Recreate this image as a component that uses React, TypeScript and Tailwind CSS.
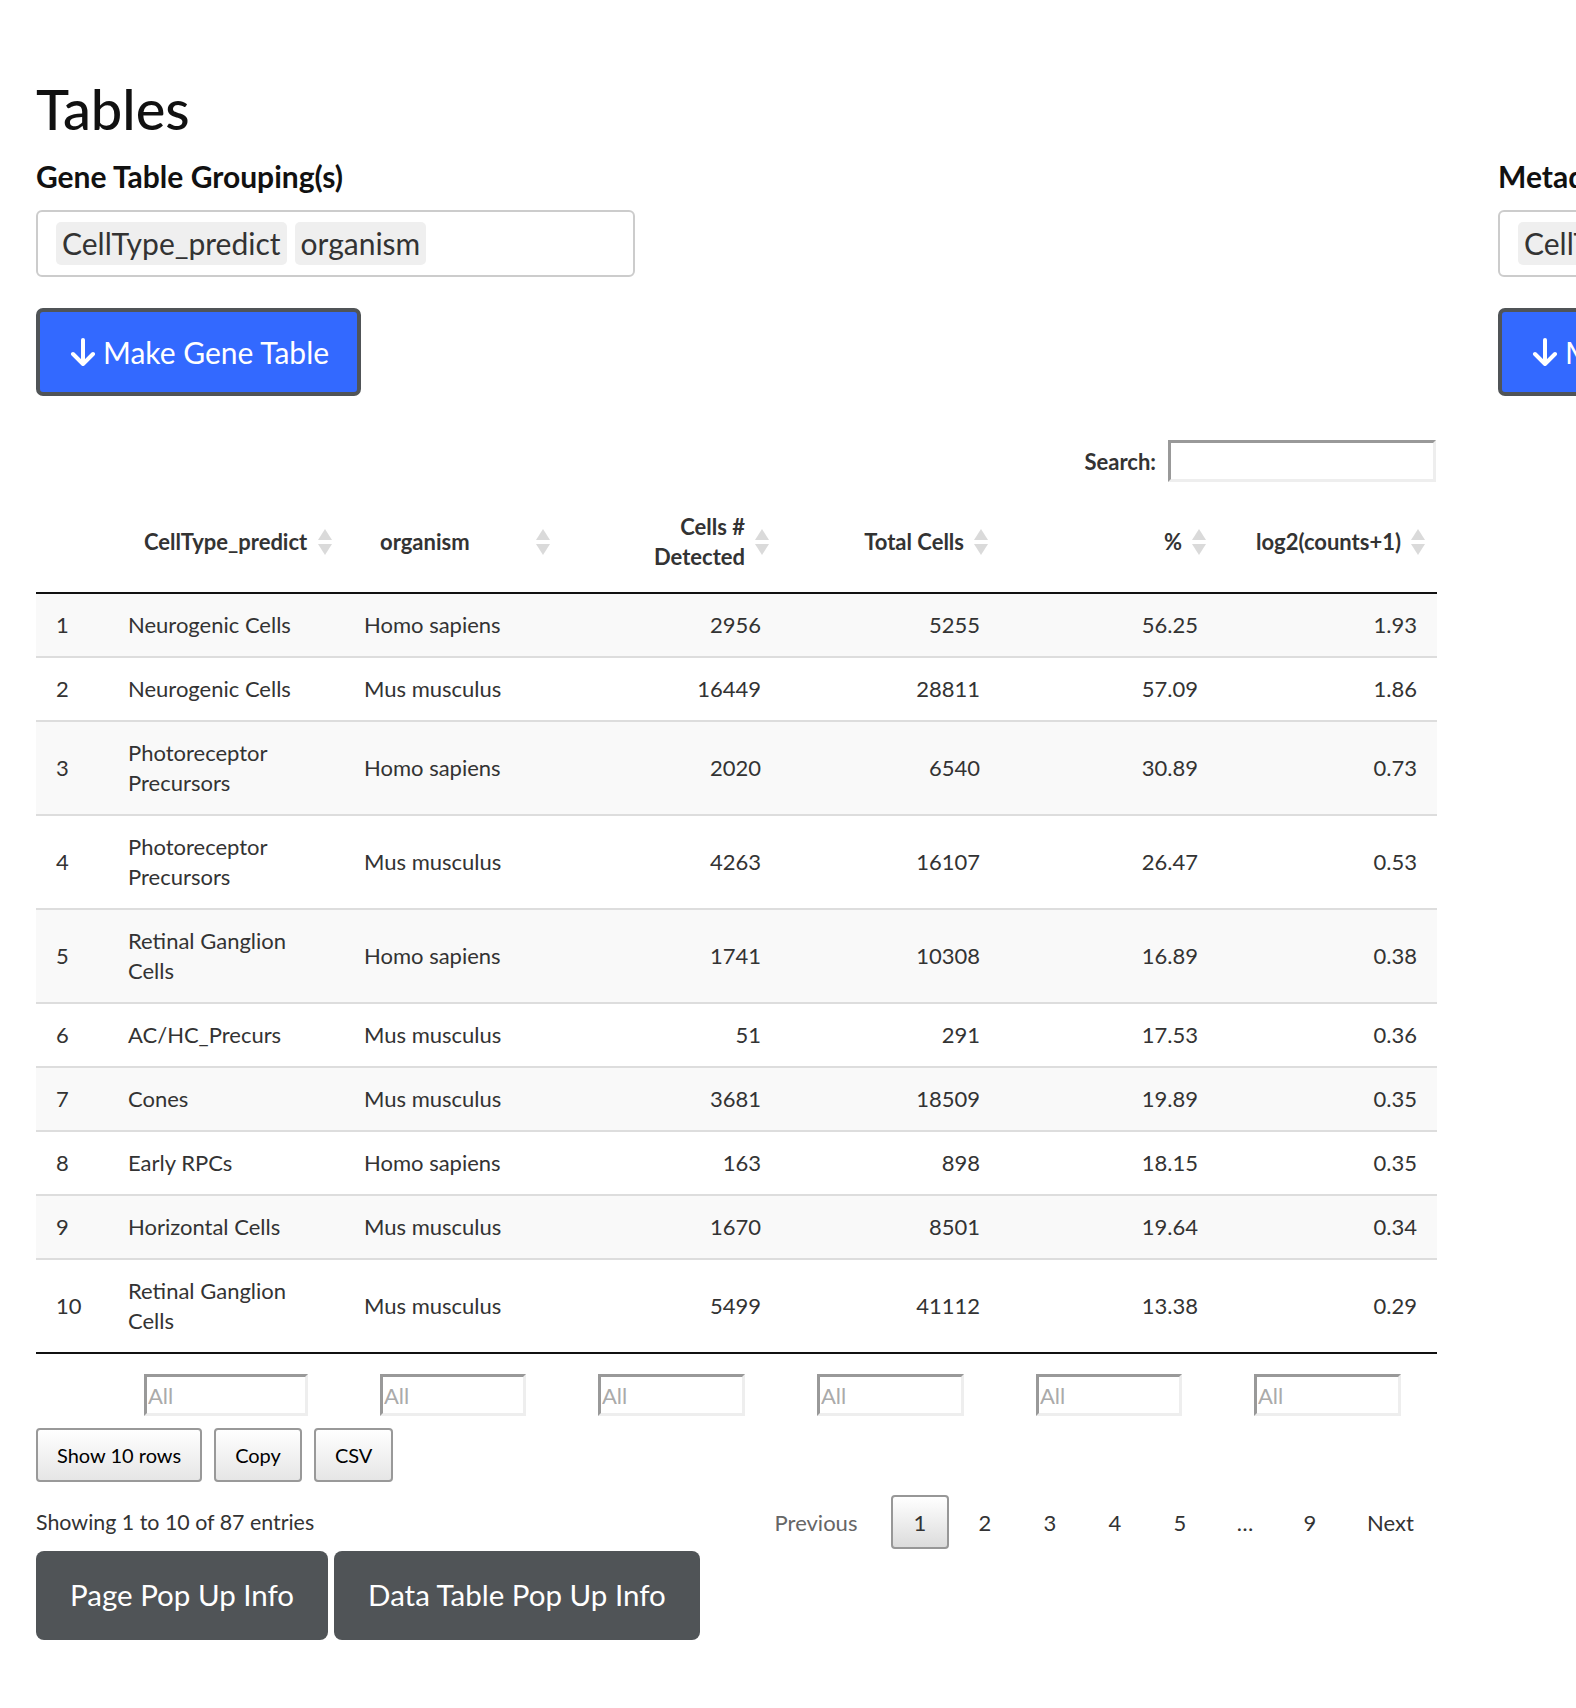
import { useState } from 'react'

// Gene table page: grouping pickers on top, a DataTables-style table below.
const ROWS = [
  ['1', 'Neurogenic Cells', 'Homo sapiens', '2956', '5255', '56.25', '1.93'],
  ['2', 'Neurogenic Cells', 'Mus musculus', '16449', '28811', '57.09', '1.86'],
  ['3', 'Photoreceptor Precursors', 'Homo sapiens', '2020', '6540', '30.89', '0.73'],
  ['4', 'Photoreceptor Precursors', 'Mus musculus', '4263', '16107', '26.47', '0.53'],
  ['5', 'Retinal Ganglion Cells', 'Homo sapiens', '1741', '10308', '16.89', '0.38'],
  ['6', 'AC/HC_Precurs', 'Mus musculus', '51', '291', '17.53', '0.36'],
  ['7', 'Cones', 'Mus musculus', '3681', '18509', '19.89', '0.35'],
  ['8', 'Early RPCs', 'Homo sapiens', '163', '898', '18.15', '0.35'],
  ['9', 'Horizontal Cells', 'Mus musculus', '1670', '8501', '19.64', '0.34'],
  ['10', 'Retinal Ganglion Cells', 'Mus musculus', '5499', '41112', '13.38', '0.29'],
]

const HEADERS = [
  { label: <>CellType_predict</>, right: false },
  { label: <>organism</>, right: false },
  { label: <>Cells #<br />Detected</>, right: true },
  { label: <>Total Cells</>, right: true },
  { label: <>%</>, right: true },
  { label: <>log2(counts+1)</>, right: true },
]

function SortIcon() {
  return (
    <span className="absolute right-[12px] top-1/2 -translate-y-1/2 flex flex-col gap-[4px]">
      <span className="w-0 h-0 border-x-[7px] border-x-transparent border-b-[11px] border-b-[#dadada]" />
      <span className="w-0 h-0 border-x-[7px] border-x-transparent border-t-[11px] border-t-[#dadada]" />
    </span>
  )
}

function DownArrow() {
  return (
    <svg width="26" height="28" viewBox="0 0 26 28" fill="none" stroke="currentColor" strokeWidth="4" strokeLinecap="round" strokeLinejoin="round" aria-hidden>
      <path d="M13 2v23" />
      <path d="M3 16l10 10 10-10" />
    </svg>
  )
}

function Grouping({ label, chips, action }: { label: string; chips: string[]; action: string }) {
  return (
    <div className="flex flex-col items-start">
      <p className="text-[30px] leading-[36px] font-bold text-[#111] mt-[18px] whitespace-nowrap">{label}</p>
      <div className="mt-[16px] w-[599px] h-[67px] border-2 border-[#ccc] rounded-[6px] flex items-center gap-[8px] pl-[18px]">
        {chips.map((c) => (
          <span key={c} className="bg-[#efefef] rounded-[5px] h-[43px] px-[6px] flex items-center text-[30px] text-[#333]">{c}</span>
        ))}
      </div>
      <button className="mt-[31px] h-[88px] border-[4px] border-[#505457] rounded-[7px] bg-[#3369ff] text-white text-[30px] flex items-center gap-[7px] pl-[30px] pr-[28px] whitespace-nowrap">
        <DownArrow />
        {action}
      </button>
    </div>
  )
}

export default function App() {
  const [query, setQuery] = useState('')

  return (
    <div className="w-[1576px] min-h-[1708px] overflow-hidden bg-white pl-[36px] font-[Lato,sans-serif] text-[#333]">
      <h1 className="pt-[78px] text-[56px] leading-[62px] font-medium text-[#111]">Tables</h1>

      <div className="flex gap-[61px]">
        <div className="w-[1401px] shrink-0">
          <Grouping label="Gene Table Grouping(s)" chips={['CellType_predict', 'organism']} action="Make Gene Table" />

          {/* datatable */}
          <div className="mt-[44px] flex justify-end items-center gap-[12px] mb-[10px] pr-[1px]">
            <label className="text-[22px] font-bold text-[#333]">Search:</label>
            <input
              value={query}
              onChange={(e) => setQuery(e.target.value)}
              className="w-[268px] h-[42px] border-[3px] border-solid border-t-[#999] border-l-[#999] border-b-[#eee] border-r-[#eee] text-[22px] px-[4px] outline-none"
            />
          </div>

          <table className="w-[1401px] table-fixed border-separate border-spacing-0 text-[22px] leading-[30px] text-[#333]">
            <colgroup>
              <col className="w-[72px]" />
              <col className="w-[236px]" />
              <col className="w-[218px]" />
              <col className="w-[219px]" />
              <col className="w-[219px]" />
              <col className="w-[218px]" />
              <col className="w-[219px]" />
            </colgroup>
            <thead>
              <tr>
                <th className="border-b-2 border-[#111]" />
                {HEADERS.map((h, i) => (
                  <th
                    key={i}
                    className={`relative px-[36px] py-[20px] font-bold align-middle border-b-2 border-[#111] ${h.right ? 'text-right' : 'text-left'}`}
                  >
                    {h.label}
                    <SortIcon />
                  </th>
                ))}
              </tr>
            </thead>
            <tbody>
              {ROWS.map((r, ri) => (
                <tr key={r[0]} className={ri % 2 === 0 ? 'bg-[#f9f9f9]' : 'bg-white'}>
                  {r.map((v, ci) => (
                    <td
                      key={ci}
                      className={`px-[20px] py-[16px] align-middle ${ri > 0 ? 'border-t-2 border-[#ddd]' : ''} ${ci >= 3 ? 'text-right' : 'text-left'}`}
                    >
                      {v}
                    </td>
                  ))}
                </tr>
              ))}
            </tbody>
            <tfoot>
              <tr>
                <td className="border-t-2 border-[#111]" />
                {HEADERS.map((_, i) => (
                  <td key={i} className="px-[36px] pt-[20px] pb-[12px] border-t-2 border-[#111]">
                    <input
                      placeholder="All"
                      className="block w-full h-[42px] border-[3px] border-solid border-t-[#999] border-l-[#999] border-b-[#eee] border-r-[#eee] text-[22px] px-[1px] placeholder:text-[#aaa] outline-none"
                    />
                  </td>
                ))}
              </tr>
            </tfoot>
          </table>

          <div className="flex gap-[12px]">
            {['Show 10 rows', 'Copy', 'CSV'].map((b) => (
              <button key={b} className="h-[54px] px-[19px] border-2 border-[#999] rounded-[4px] bg-linear-to-b from-white to-[#e6e6e6] text-[20px] text-black">
                {b}
              </button>
            ))}
          </div>

          <div className="mt-[13px] h-[54px] flex items-center justify-between pr-[2px]">
            <span className="text-[21.4px] text-[#333]">Showing 1 to 10 of 87 entries</span>
            <div className="flex items-center gap-[7px] text-[22px]">
              <span className="w-[128px] mr-[4px] text-center text-[#666]">Previous</span>
              <span className="w-[58px] h-[54px] flex items-center justify-center border-2 border-[#979797] rounded-[4px] bg-linear-to-b from-white to-[#dcdcdc] text-[#333]">1</span>
              {['2', '3', '4', '5', '…', '9'].map((p) => (
                <span key={p} className="w-[58px] text-center text-[#333]">{p}</span>
              ))}
              <span className="w-[89px] text-center text-[#333]">Next</span>
            </div>
          </div>

          <div className="mt-[2px] flex gap-[6px]">
            <button className="h-[89px] px-[34px] rounded-[8px] bg-[#505457] text-white text-[29.5px]">Page Pop Up Info</button>
            <button className="h-[89px] px-[34px] rounded-[8px] bg-[#505457] text-white text-[29.5px]">Data Table Pop Up Info</button>
          </div>
        </div>

        <div className="w-[599px] shrink-0">
          <Grouping label="Metadata Table Grouping(s)" chips={['CellType_predict', 'organism']} action="Make Metadata Table" />
        </div>
      </div>
    </div>
  )
}
